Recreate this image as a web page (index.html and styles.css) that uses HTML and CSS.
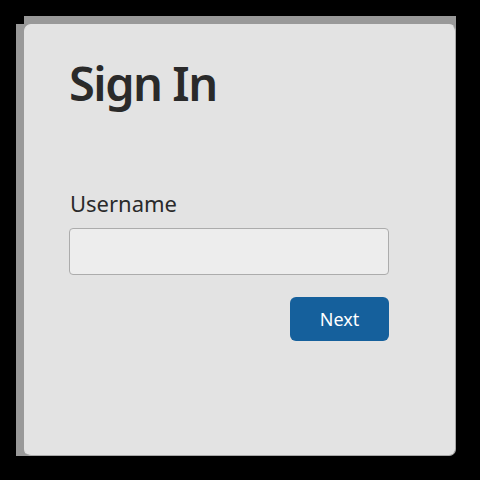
FILE: index.html
```html
<!DOCTYPE html>
<html>
<head>
<meta charset="utf-8">
<link rel="stylesheet" href="styles.css">
</head>
<body>
<div class="card">
  <h1 class="title">Sign In</h1>
  <label class="label" for="user">Username</label>
  <input class="input" id="user" type="text">
  <div class="actions">
    <button class="btn">Next</button>
  </div>
</div>
</body>
</html>
```
FILE: styles.css
```css
html {
  background: #000;
}
body {
  margin: 0;
  padding: 24px;
  font-family: "Noto Sans", "Open Sans", sans-serif;
  color: #2a2a2a;
}
.card {
  position: relative;
  box-sizing: border-box;
  width: 432px;
  height: 432px;
  background: #e3e3e3;
  border-radius: 7px;
  border: 1px solid #e3e3e3;
  border-right-color: #a8a8a8;
  border-bottom-color: #a8a8a8;
  padding: 26px 44px 0 44px;
  display: flex;
  flex-direction: column;
}
.card::before,
.card::after {
  content: "";
  position: absolute;
  z-index: -1;
  background: #999;
}
.card::before {
  left: -9px;
  top: -1px;
  width: 16px;
  bottom: -1px;
}
.card::after {
  left: -1px;
  top: -9px;
  right: -1px;
  height: 16px;
}
.title {
  margin: 0;
  font-size: 47px;
  font-weight: 600;
  letter-spacing: -1.5px;
  line-height: 64px;
}
.label {
  margin-top: 74px;
  font-size: 22px;
  line-height: 28px;
  padding-left: 1px;
}
.input {
  box-sizing: border-box;
  margin-top: 11px;
  width: 320px;
  height: 47px;
  border: 1px solid #acacac;
  border-radius: 4px;
  background: #ededed;
}
.actions {
  display: flex;
  justify-content: flex-end;
  width: 320px;
  margin-top: 22px;
}
.btn {
  width: 99px;
  height: 44px;
  border: none;
  border-radius: 6px;
  background: #15609c;
  color: #fff;
  font-family: "Noto Sans", "Open Sans", sans-serif;
  font-size: 18px;
}
```
